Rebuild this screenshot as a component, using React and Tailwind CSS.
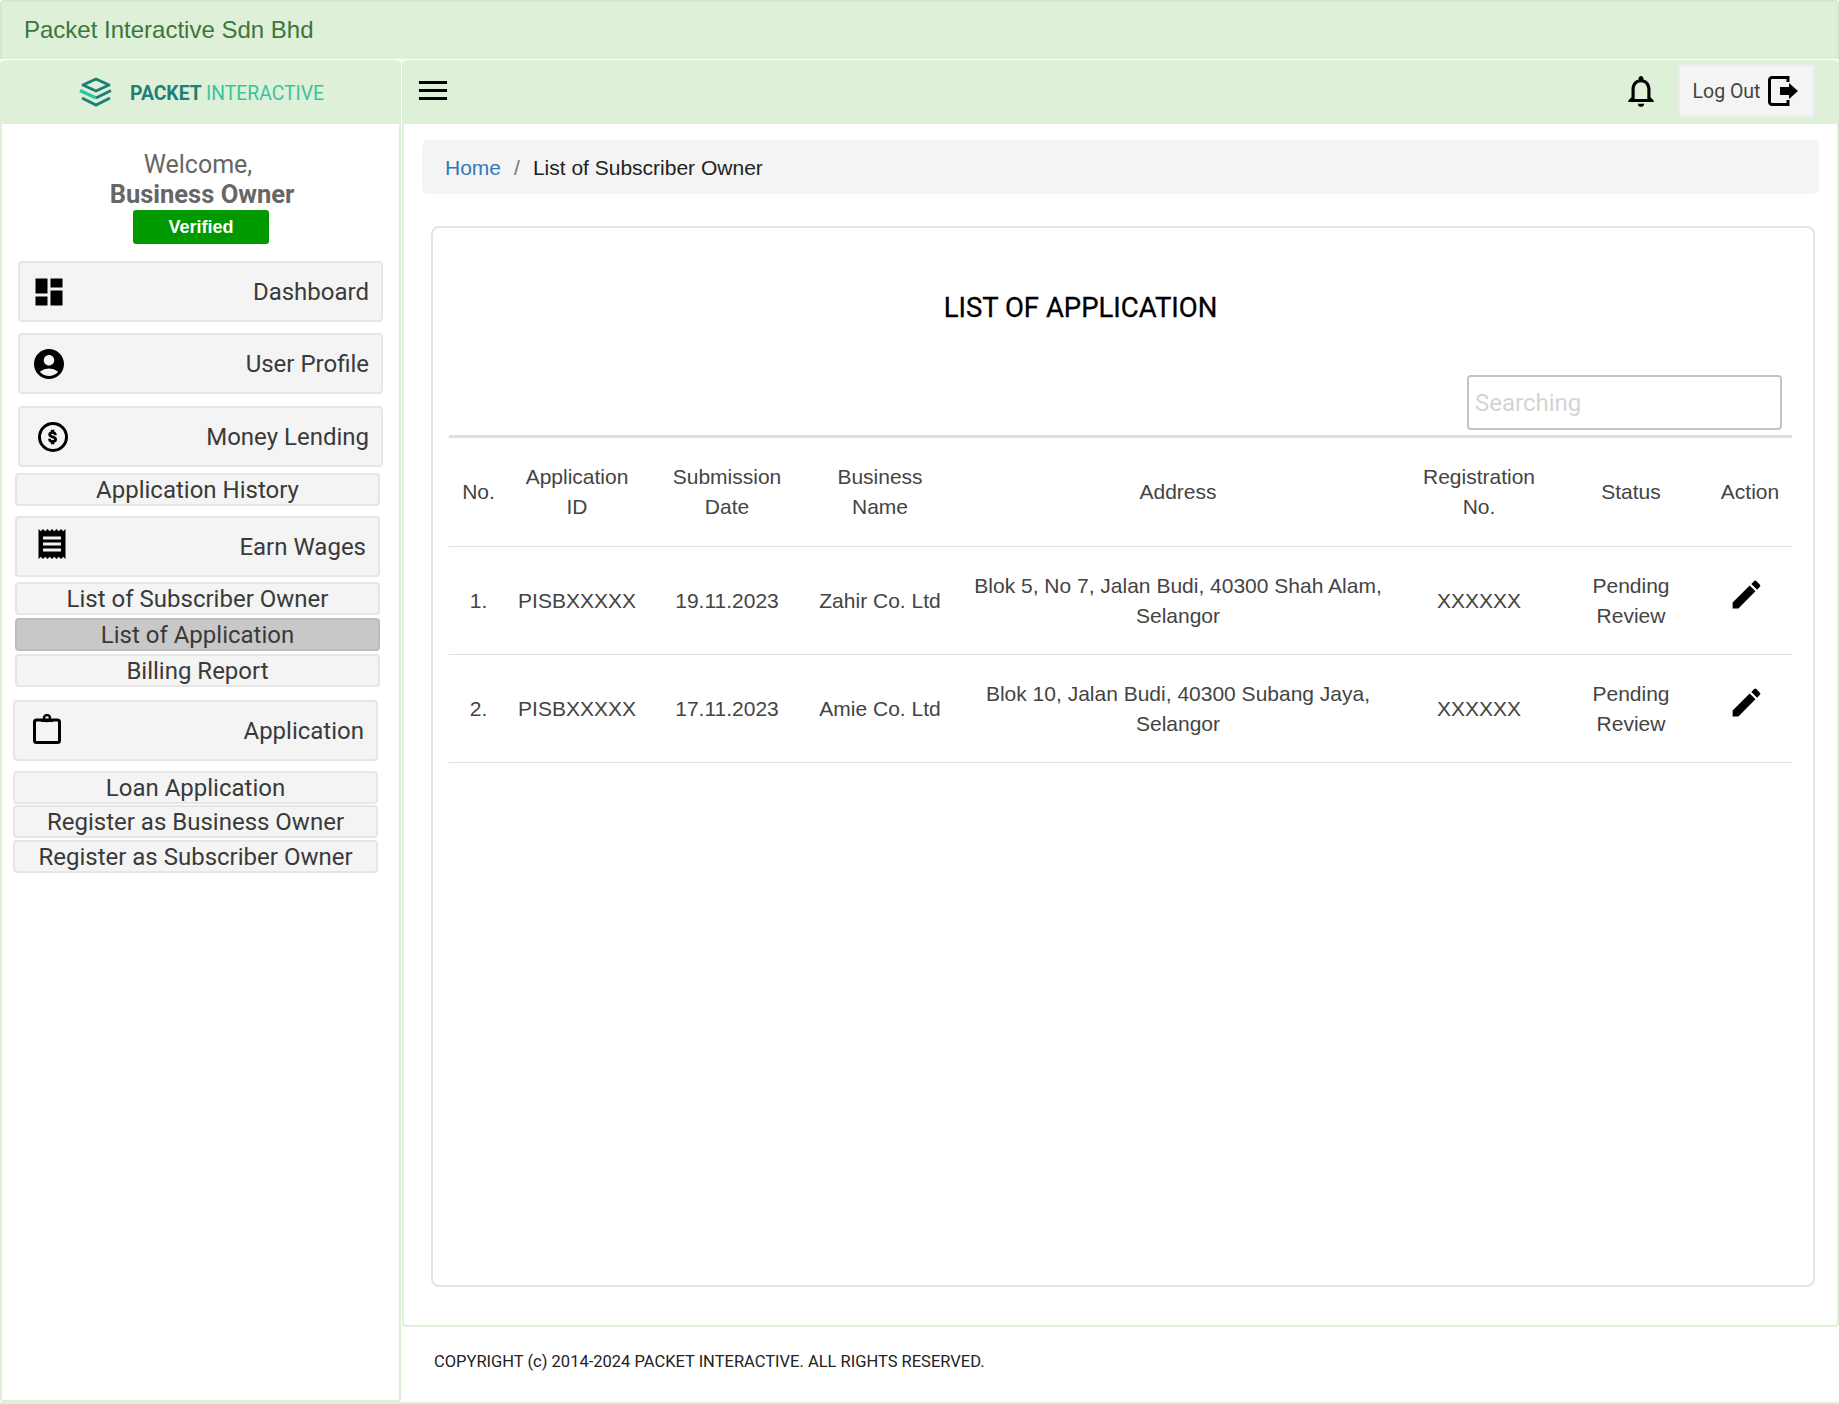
import React from 'react';
import { MdDashboard, MdAccountCircle, MdReceipt, MdNotificationsNone, MdEdit } from 'react-icons/md';

const headers = [
  { label: 'No.', w: 'w-[59px]' },
  { label: 'Application ID', w: 'w-[138px]' },
  { label: 'Submission Date', w: 'w-[162px]' },
  { label: 'Business Name', w: 'w-[144px]' },
  { label: 'Address', w: 'w-[452px]' },
  { label: 'Registration No.', w: 'w-[150px]' },
  { label: 'Status', w: 'w-[154px]' },
  { label: 'Action', w: 'w-[84px]' },
];

const rows = [
  { no: '1.', id: 'PISBXXXXX', date: '19.11.2023', name: 'Zahir Co. Ltd', address: 'Blok 5, No 7, Jalan Budi, 40300 Shah Alam, Selangor' },
  { no: '2.', id: 'PISBXXXXX', date: '17.11.2023', name: 'Amie Co. Ltd', address: 'Blok 10, Jalan Budi, 40300 Subang Jaya, Selangor' },
];

const PacketLogo = () => (
  <svg width="36" height="30" viewBox="0 0 36 30" fill="none">
    <path d="M18 2 31 8 18 14 5 8Z" stroke="#1c7f78" strokeWidth="3" strokeLinejoin="round" />
    <path d="M2 13.5 18 21" stroke="#2fc79a" strokeWidth="3.4" />
    <path d="M18 21 33 13.5" stroke="#1c7f78" strokeWidth="3" />
    <path d="M4 21 18 28 32 21" stroke="#1c7f78" strokeWidth="3" />
  </svg>
);

const DollarIcon = () => (
  <svg width="32" height="32" viewBox="0 0 32 32" fill="none">
    <circle cx="16" cy="16" r="13.5" stroke="currentColor" strokeWidth="3" />
    <g transform="translate(7 7) scale(0.75)">
      <path fill="currentColor" stroke="currentColor" strokeWidth="1.6" d="M11.8 10.9c-2.27-.59-3-1.2-3-2.15 0-1.09 1.01-1.85 2.7-1.85 1.78 0 2.44.85 2.5 2.1h2.21c-.07-1.72-1.12-3.3-3.21-3.81V3h-3v2.16c-1.94.42-3.5 1.68-3.5 3.61 0 2.31 1.91 3.46 4.7 4.13 2.5.6 3 1.48 3 2.41 0 .69-.49 1.79-2.7 1.79-2.06 0-2.87-.92-2.98-2.1h-2.2c.12 2.19 1.76 3.42 3.68 3.83V21h3v-2.15c1.95-.37 3.5-1.5 3.5-3.55 0-2.84-2.43-3.81-4.7-4.4z" />
    </g>
  </svg>
);

const ClipboardIcon = () => (
  <svg width="28" height="30" viewBox="0 0 28 30" fill="none">
    <rect x="1.5" y="6" width="25" height="22.5" rx="2" stroke="currentColor" strokeWidth="3" />
    <circle cx="14" cy="4" r="3" stroke="currentColor" strokeWidth="2.4" />
    <rect x="8" y="5" width="12" height="3" fill="currentColor" />
  </svg>
);

const LogoutIcon = () => (
  <svg width="30" height="30" viewBox="0 0 30 30" fill="none">
    <path d="M20 6V1.5H4A2.5 2.5 0 0 0 1.5 4v22A2.5 2.5 0 0 0 4 28.5h16V24" stroke="currentColor" strokeWidth="3" />
    <path d="M12 11h9V7l9 8-9 8v-4h-9z" fill="currentColor" />
  </svg>
);

const MenuButton = ({ icon, label, className, iconClass }) => (
  <div className={`flex h-[61px] w-[365px] items-center justify-between rounded border-2 border-[#e6e6e6] bg-[#f4f4f4] pr-[12px] text-[24px] text-[#3a3a3a] ${className}`}>
    <span className={`flex items-center text-black ${iconClass}`}>{icon}</span>
    <span>{label}</span>
  </div>
);

const SubButton = ({ label, active, className }) => (
  <div className={`flex h-[33px] w-[365px] items-center justify-center rounded border-2 text-[24px] text-[#3a3a3a] ${active ? 'border-[#bdbdbd] bg-[#c8c8c8]' : 'border-[#e6e6e6] bg-[#f4f4f4]'} ${className}`}>
    {label}
  </div>
);

const Sidebar = () => (
  <aside className="flex w-[401px] shrink-0 flex-col rounded border-2 border-t-0 border-[#dff0d8] bg-white">
    <div className="flex h-[64px] items-center justify-center gap-[16px] rounded-t bg-[#dff0d8]">
      <PacketLogo />
      <div className="w-[194px] pt-[2px]">
        <div className="origin-left scale-x-[0.92] whitespace-nowrap text-[21px] leading-none">
          <span className="font-bold text-[#1c7f78]">PACKET </span>
          <span className="text-[#3cc2a0]">INTERACTIVE</span>
        </div>
      </div>
    </div>
    <div className="flex flex-col items-center pl-[3px] pt-[26px] text-[#666]">
      <div className="pr-[8px] text-[25px] leading-[30px]">Welcome,</div>
      <div className="text-[25.5px] font-bold leading-[29px]">Business Owner</div>
      <div className="mt-[1px] mr-[3px] flex h-[34px] w-[136px] items-center justify-center rounded-[3px] bg-[#009a00] pl-[1px] font-['Liberation_Sans',sans-serif] text-[18px] font-bold text-white">Verified</div>
    </div>
    <div className="flex flex-col pl-[15px] pt-[17px]">
      <MenuButton label="Dashboard" icon={<MdDashboard size={36} />} className="ml-[1px]" iconClass="pl-[11px]" />
      <MenuButton label="User Profile" icon={<MdAccountCircle size={36} />} className="mt-[11px] ml-[1px]" iconClass="pl-[11px]" />
      <MenuButton label="Money Lending" icon={<DollarIcon />} className="mt-[12px] ml-[1px]" iconClass="pl-[17px]" />
      <SubButton label="Application History" className="mt-[6px] -ml-[2px]" />
      <MenuButton label="Earn Wages" icon={<MdReceipt size={36} />} className="mt-[10px] -ml-[2px]" iconClass="pl-[17px] pb-[5px]" />
      <SubButton label="List of Subscriber Owner" className="mt-[5px] -ml-[2px]" />
      <SubButton label="List of Application" active className="mt-[3px] -ml-[2px]" />
      <SubButton label="Billing Report" className="mt-[3px] -ml-[2px]" />
      <MenuButton label="Application" icon={<ClipboardIcon />} className="mt-[13px] -ml-[4px]" iconClass="pl-[18px] pb-[3px]" />
      <SubButton label="Loan Application" className="mt-[10px] -ml-[4px]" />
      <SubButton label="Register as Business Owner" className="mt-[1px] -ml-[4px]" />
      <SubButton label="Register as Subscriber Owner" className="mt-[2px] -ml-[4px]" />
    </div>
  </aside>
);

const ApplicationTable = () => (
  <table className="w-full table-fixed border-collapse text-center font-['Liberation_Sans',sans-serif] text-[21px] leading-[30px] text-[#444]">
    <thead>
      <tr className="h-[110px] border-y-2 border-y-[#e0e0e0] [border-top-width:3px] [border-bottom-width:1px]">
        {headers.map((h) => (
          <th key={h.label} className={`${h.w} px-[12px] font-normal`}>{h.label}</th>
        ))}
      </tr>
    </thead>
    <tbody>
      {rows.map((r) => (
        <tr key={r.no} className="h-[108px] border-b border-[#e0e0e0]">
          <td>{r.no}</td>
          <td>{r.id}</td>
          <td>{r.date}</td>
          <td>{r.name}</td>
          <td className="px-[8px]">{r.address}</td>
          <td>XXXXXX</td>
          <td className="px-[30px]">Pending Review</td>
          <td>
            <span className="flex justify-center pr-[7px] pb-[12px] text-black"><MdEdit size={37} /></span>
          </td>
        </tr>
      ))}
    </tbody>
  </table>
);

const Main = () => (
  <div className="flex min-w-0 flex-1 flex-col">
    <div className="ml-[1px] flex h-[1267px] flex-col rounded border-2 border-t-0 border-[#dff0d8] bg-white">
      <div className="flex h-[64px] items-center justify-between rounded-t bg-[#dff0d8] pb-[3px] pl-[15px] pr-[22px]">
        <div className="flex w-[28px] flex-col gap-[5px]">
          <span className="h-[3px] bg-black" />
          <span className="h-[3px] bg-black" />
          <span className="h-[3px] bg-black" />
        </div>
        <div className="flex items-center gap-[18px]">
          <MdNotificationsNone size={38} className="text-black" />
          <div className="flex h-[54px] w-[137px] items-center justify-center gap-[8px] rounded border-2 border-[#ececec] bg-[#f4f4f4] pr-[2px] text-[19.5px] text-[#444]">
            <span className="pt-[2px]">Log Out</span>
            <span className="text-black"><LogoutIcon /></span>
          </div>
        </div>
      </div>
      <div className="flex flex-1 flex-col px-[18px] pt-[16px] pb-[38px]">
        <div className="flex h-[54px] items-center rounded-md bg-[#f4f4f4] pl-[23px] pt-[2px] font-['Liberation_Sans',sans-serif] text-[21px] text-[#222]">
          <span className="text-[#337ab7]">Home</span>
          <span className="px-[13px] text-[#777]">/</span>
          <span>List of Subscriber Owner</span>
        </div>
        <div className="mt-[32px] ml-[9px] mr-[4px] flex-1 rounded-lg border-2 border-[#e4e4e4] pl-[16px] pr-[21px]">
          <h2 className="mt-[65px] pr-[80px] text-center text-[27.5px] font-normal leading-[30px] text-black [-webkit-text-stroke:0.3px_black]">LIST OF APPLICATION</h2>
          <div className="mt-[52px] flex justify-end pr-[10px]">
            <div className="flex h-[55px] w-[315px] items-center rounded border-2 border-[#c4c4c4] pl-[6px] text-[24px] text-[#d4d4d4]">Searching</div>
          </div>
          <div className="mt-[5px]">
            <ApplicationTable />
          </div>
        </div>
      </div>
    </div>
    <div className="flex flex-1 items-center pb-[5px] pl-[33px] text-[16.5px] text-[#222]">COPYRIGHT (c) 2014-2024 PACKET INTERACTIVE. ALL RIGHTS RESERVED.</div>
  </div>
);

export default function App() {
  return (
    <div className="flex h-[1404px] w-[1839px] flex-col overflow-hidden bg-white font-['Roboto',sans-serif]">
      <div className="flex h-[59px] shrink-0 items-center rounded-t border-2 border-b-0 border-[#d6e9c6] bg-[#dff0d8] pb-[2px] pl-[22px] font-['Liberation_Sans',sans-serif] text-[24px] text-[#3c763d]">Packet Interactive Sdn Bhd</div>
      <div className="mt-[1px] flex flex-1 border-b-2 border-[#dff0d8]">
        <Sidebar />
        <Main />
      </div>
    </div>
  );
}
